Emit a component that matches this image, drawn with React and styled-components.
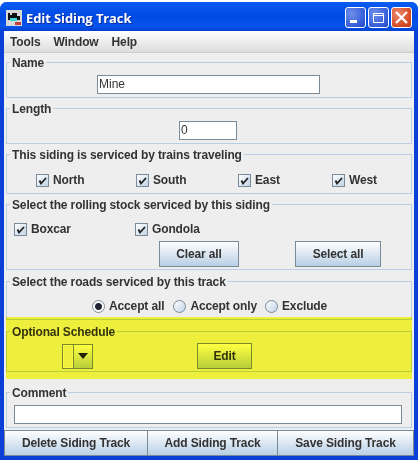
import React from "react";
import styled, { createGlobalStyle } from "styled-components";

const Global = createGlobalStyle`
  html, body {
    margin: 0;
    padding: 0;
    background: #fff;
  }
  * {
    box-sizing: border-box;
  }
`;

const Frame = styled.div`
  width: 419px;
  height: 460px;
  padding-top: 2px;
  overflow: hidden;
  font-family: "Liberation Sans", Arial, sans-serif;
  font-size: 12px;
  font-weight: bold;
  letter-spacing: -0.13px;
  color: #333;
`;

const Win = styled.div`
  width: 418px;
  height: 458px;
  display: flex;
  flex-direction: column;
  background: #0a3fd8;
  border-radius: 7px 7px 0 0;
  padding: 0 4px 4px 4px;
`;

const TitleBar = styled.div`
  height: 29px;
  flex: none;
  margin: 0 -4px;
  padding: 2px 6px 0 6px;
  display: flex;
  align-items: center;
  gap: 2px;
  border-radius: 7px 7px 0 0;
  background: linear-gradient(#0a5cf0 0, #0758ee 3px, #0149e4 14px, #0355ec 24px, #0340d0 29px);
`;

const Title = styled.div`
  flex: 1;
  margin-left: 2px;
  color: #fff;
  font-family: "Open Sans", sans-serif;
  font-size: 13px;
  font-weight: bold;
  letter-spacing: -0.1px;
  text-shadow: 1px 1px 0 #0a2d9c;
`;

const WinBtn = styled.div`
  width: 21px;
  height: 21px;
  border: 1px solid #fff;
  border-radius: 3px;
  display: flex;
  align-items: center;
  justify-content: center;
  background: ${(p) =>
    p.$close
      ? "radial-gradient(circle at 30% 30%, #e88a6c, #d9512c 60%, #c23a12)"
      : "radial-gradient(circle at 30% 30%, #6f8fea, #3c63dc 60%, #2347c8)"};
`;

const MenuBar = styled.div`
  height: 22px;
  flex: none;
  display: flex;
  align-items: center;
  padding-left: 6px;
  gap: 13px;
  background: linear-gradient(#fff, #dcdcdc);
  border-bottom: 1px solid #ccc;
`;

const Panel = styled.div`
  position: relative;
  flex: 1;
  min-height: 0;
  display: flex;
  flex-direction: column;
  background: #eee;
  padding: 2px 2px 0 2px;
`;

const Box = styled.fieldset`
  margin: ${(p) => p.$top || 0}px 0 0 0;
  padding: 0;
  height: ${(p) => p.$h}px;
  flex: none;
  min-width: 0;
  display: flex;
  flex-direction: column;
  border: 1px solid #b8cfe5;
`;

const Legend = styled.legend`
  margin-left: 3px;
  padding: 0 2px;
  height: 14px;
  font-size: 12px;
  line-height: 16px;
`;

const Row = styled.div`
  display: flex;
  align-items: center;
  height: ${(p) => p.$h || 20}px;
  margin-top: ${(p) => p.$top || 0}px;
  padding-left: ${(p) => p.$left || 0}px;
`;

const Field = styled.div`
  width: ${(p) => p.$w}px;
  height: 19px;
  background: #fff;
  border: 1px solid #7a8a99;
  padding-left: 1px;
  font-size: 12px;
  font-weight: normal;
  letter-spacing: 0;
  line-height: 17px;
`;

const Check = styled.label`
  display: flex;
  align-items: center;
  gap: 4px;
  width: ${(p) => p.$w}px;
`;

const CheckBox = styled.span`
  width: 13px;
  height: 13px;
  display: flex;
  align-items: center;
  justify-content: center;
  border: 1px solid #7a8a99;
  background: linear-gradient(135deg, #fff, #c0d3e6);
`;

const Radio = styled.label`
  display: flex;
  align-items: center;
  gap: 4px;
  margin-right: ${(p) => p.$gap || 0}px;
`;

const RadioDot = styled.span`
  width: 13px;
  height: 13px;
  border-radius: 50%;
  border: 1px solid #7a8a99;
  background: ${(p) =>
    p.$on
      ? "radial-gradient(circle, #223 0 3px, #fff 4px)"
      : "linear-gradient(135deg, #fff, #c0d3e6)"};
`;

const Button = styled.div`
  height: 26px;
  width: ${(p) => p.$w}px;
  flex: none;
  margin-left: ${(p) => p.$left || 0}px;
  display: flex;
  align-items: center;
  justify-content: center;
  border: 1px solid #7a8a99;
  background: linear-gradient(#fff, #b8cfe5);
`;

const Highlight = styled.div`
  position: absolute;
  left: 2px;
  right: 2px;
  top: 264px;
  height: 62px;
  background: #ffff40;
  mix-blend-mode: multiply;
  pointer-events: none;
`;

const Combo = styled.div`
  width: 31px;
  height: 25px;
  margin-left: 55px;
  flex: none;
  display: flex;
  border: 1px solid #7a8a99;
  background: linear-gradient(#fff, #b8cfe5);
`;

const ComboValue = styled.div`
  width: 10px;
  flex: none;
  background: #eee;
  border: 1px solid #f8f8f8;
`;

const ComboArrow = styled.div`
  flex: 1;
  display: flex;
  align-items: center;
  justify-content: center;
  border-left: 1px solid #7a8a99;
`;

const Footer = styled.div`
  height: 26px;
  margin: 2px -2px 0 -2px;
  flex: none;
  display: flex;
`;

const FootBtn = styled(Button)`
  margin-left: -1px;
  &:first-child {
    margin-left: 0;
  }
`;

const Tick = () => (
  <svg width="9" height="9" viewBox="0 0 9 9">
    <path d="M1.5 4.5 L3 7.5 L8 2" fill="none" stroke="#222" strokeWidth="1.8" />
  </svg>
);

const AppIcon = () => (
  <svg width="16" height="16" viewBox="0 0 16 16" style={{ flex: "none" }}>
    <rect width="16" height="16" fill="#d8d8d8" />
    <path d="M2 3h2v2h2V3h5v3h3v4H2z" fill="#111" />
    <rect x="4" y="8" width="7" height="3" fill="#3fd6d6" />
    <rect x="9" y="12" width="6" height="3" fill="#c04040" />
  </svg>
);

const App = () => {
  return (
    <Frame>
      <Global />
      <Win>
        <TitleBar>
          <AppIcon />
          <Title>Edit Siding Track</Title>
          <WinBtn>
            <svg width="13" height="13" viewBox="0 0 13 13">
              <rect x="1" y="9" width="7" height="3" fill="#fff" />
            </svg>
          </WinBtn>
          <WinBtn>
            <svg width="13" height="13" viewBox="0 0 13 13">
              <path d="M1.5 4.5h10v7h-10z M1.5 2.5h10v2h-10z" fill="none" stroke="#fff" />
            </svg>
          </WinBtn>
          <WinBtn $close>
            <svg width="13" height="13" viewBox="0 0 13 13">
              <path d="M1 1 L12 12 M12 1 L1 12" stroke="#fff" strokeWidth="2.2" />
            </svg>
          </WinBtn>
        </TitleBar>
        <MenuBar>
          <span>Tools</span>
          <span>Window</span>
          <span>Help</span>
        </MenuBar>
        <Panel>
          <Box $h={43}>
            <Legend>Name</Legend>
            <Row $h={19} $top={6} $left={90}>
              <Field $w={223}>Mine</Field>
            </Row>
          </Box>
          <Box $top={3} $h={43}>
            <Legend>Length</Legend>
            <Row $h={19} $top={6} $left={172}>
              <Field $w={58}>0</Field>
            </Row>
          </Box>
          <Box $top={3} $h={47}>
            <Legend>This siding is serviced by trains traveling</Legend>
            <Row $h={20} $top={9} $left={29}>
              <Check $w={100}><CheckBox><Tick /></CheckBox>North</Check>
              <Check $w={102}><CheckBox><Tick /></CheckBox>South</Check>
              <Check $w={94}><CheckBox><Tick /></CheckBox>East</Check>
              <Check $w={60}><CheckBox><Tick /></CheckBox>West</Check>
            </Row>
          </Box>
          <Box $top={3} $h={73}>
            <Legend>Select the rolling stock serviced by this siding</Legend>
            <Row $h={20} $top={8} $left={7}>
              <Check $w={121}><CheckBox><Tick /></CheckBox>Boxcar</Check>
              <Check $w={80}><CheckBox><Tick /></CheckBox>Gondola</Check>
            </Row>
            <Row $h={26} $top={2} $left={152}>
              <Button $w={80}>Clear all</Button>
              <Button $w={86} $left={56}>Select all</Button>
            </Row>
          </Box>
          <Box $top={4} $h={46}>
            <Legend>Select the roads serviced by this track</Legend>
            <Row $h={20} $top={8} $left={85}>
              <Radio $gap={9}><RadioDot $on />Accept all</Radio>
              <Radio $gap={8}><RadioDot />Accept only</Radio>
              <Radio><RadioDot />Exclude</Radio>
            </Row>
          </Box>
          <Box $top={4} $h={48}>
            <Legend>Optional Schedule</Legend>
            <Row $h={26} $top={5}>
              <Combo>
                <ComboValue />
                <ComboArrow>
                  <svg width="10" height="6" viewBox="0 0 10 6">
                    <path d="M0 0h10L5 6z" fill="#222" />
                  </svg>
                </ComboArrow>
              </Combo>
              <Button $w={55} $left={104}>Edit</Button>
            </Row>
          </Box>
          <Box $top={13} $h={43}>
            <Legend>Comment</Legend>
            <Row $h={19} $top={6} $left={7}>
              <Field $w={388} />
            </Row>
          </Box>
          <Highlight />
          <Footer>
            <FootBtn $w={144}>Delete Siding Track</FootBtn>
            <FootBtn $w={131}>Add Siding Track</FootBtn>
            <FootBtn $w={137}>Save Siding Track</FootBtn>
          </Footer>
        </Panel>
      </Win>
    </Frame>
  );
};

export default App;
